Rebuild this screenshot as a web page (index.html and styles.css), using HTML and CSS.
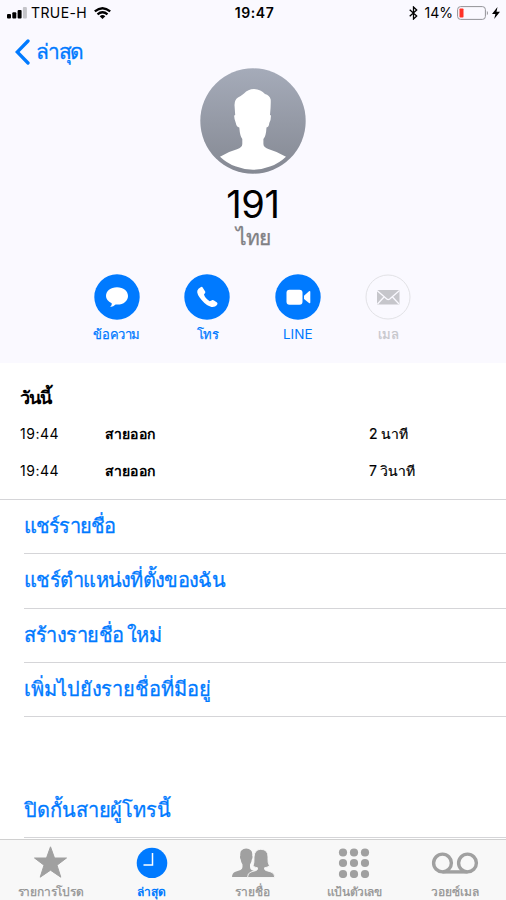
FILE: index.html
```html
<!DOCTYPE html>
<html lang="th">
<head>
<meta charset="utf-8">
<title>191</title>
<link rel="stylesheet" href="styles.css">
</head>
<body>
<div class="phone">
  <header class="top">
    <div class="status">
      <div class="carrier">
        <svg class="signal" width="20" height="12" viewBox="0 0 20 12"><rect x="0" y="7" width="4" height="4.5" rx="1"/><rect x="5.3" y="5.2" width="4" height="6.3" rx="1"/><rect x="10.6" y="3" width="4" height="8.5" rx="1"/><rect x="15.9" y="0" width="4" height="11.5" rx="1" fill="#c4c4c9"/></svg>
        <span class="carrier-name">TRUE-H</span>
        <svg class="wifi" width="17" height="12" viewBox="0 0 17 12"><g fill="none" stroke="#000" stroke-width="2.3"><path d="M.8 4.4Q8.5-2 16.200 4.400"/><path d="M3.500 7.300Q8.500 3.200 13.500 7.300"/></g><path d="M5.700 9.200Q8.500 7 11.300 9.200L8.500 12Z"/></svg>
      </div>
      <span class="clock">19:47</span>
      <div class="power">
        <svg class="bluetooth" width="9" height="14" viewBox="0 0 9 14" fill="none" stroke="#000" stroke-width="1.3"><path d="M.7 3.700L7.700 10 4.500 13V1L7.700 4 .7 10.300"/></svg>
        <span class="percent">14%</span>
        <svg width="33" height="14" viewBox="0 0 33 14"><rect x=".6" y=".6" width="27.800" height="12.800" rx="3" fill="none" stroke="#929297"/><rect x="2.500" y="2.500" width="4" height="9" rx=".8" fill="#ff3126"/><path d="M29.900 4.700Q32 7 29.900 9.300Z" fill="#929297"/></svg>
        <svg class="bolt" width="8" height="12" viewBox="0 0 8 12"><path d="M5.500 0L0 7H3.400L2.200 12 8 4.800H4.500Z"/></svg>
      </div>
    </div>
    <nav class="back">
      <svg width="15" height="26" viewBox="0 0 15 26" fill="none" stroke="#007aff" stroke-width="3.300" stroke-linecap="round"><path d="M13 2L2.200 13 13 24"/></svg>
      <span class="back-label">ล่าสุด</span>
    </nav>
    <svg class="avatar" width="106" height="106" viewBox="0 0 106 106">
      <defs><linearGradient id="shade" x2="0" y2="1"><stop stop-color="#a5abb9"/><stop offset="1" stop-color="#858993"/></linearGradient></defs>
      <circle cx="53" cy="53" r="52.700" fill="url(#shade)"/>
      <path fill="#fff" d="M20 88.700Q28 83.700 37 81.300Q42.300 79.500 42.300 76V71Q40 68.500 39.300 59.500Q36.500 59 35.800 55Q34 50.500 34.200 47.500L35.200 47L34.500 37Q34.500 31.500 38 29.500Q41 28 44 25.500Q48 21 54 21Q61 21.500 65 26Q69.500 27 70.700 31.500Q71 37 70 47L71 47.500Q71 52 69.300 55Q69 59 66.500 59.500Q66 68.500 63.400 71V76Q63.500 79.500 69 81.300Q78 84 86 88.700A48.300 48.300 0 0 1 20 88.700Z"/>
    </svg>
    <h1 class="number">191</h1>
    <p class="region">ไทย</p>
    <div class="actions">
      <div class="action">
        <svg width="46" height="46" viewBox="0 0 46 46"><circle cx="23" cy="23" r="22.700" fill="#007aff"/><path fill="#fff" d="M23 13.200C16.500 13.200 12 17 12 22Q12 26.500 17.700 29.200Q18.300 31.500 16.200 33.100Q19.500 32.700 21.600 30.500C29 31.300 34 27.200 34 22S29.500 13.200 23 13.200Z"/></svg>
        <span class="caption message">ข้อความ</span>
      </div>
      <div class="action">
        <svg width="46" height="46" viewBox="0 0 46 46"><circle cx="23" cy="23" r="22.700" fill="#007aff"/><path fill="#fff" d="M16.600 13.300Q18 12.200 18.800 13.700L21.300 17.800Q21.700 18.900 20 20.200Q20.500 23.500 25.700 27.300L28.500 26Q29.200 25.700 30 26.400L33 28.500Q34 29.200 33 31Q31 33.500 27.500 33Q22.500 31.800 17.600 26Q12.500 20 13.300 16.700Q14 14.500 16.600 13.300Z"/></svg>
        <span class="caption call">โทร</span>
      </div>
      <div class="action">
        <svg width="46" height="46" viewBox="0 0 46 46"><circle cx="23" cy="23" r="22.700" fill="#007aff"/><rect x="11.500" y="15.700" width="16" height="15" rx="3" fill="#fff"/><path d="M29 21.700L34 17.300Q35.300 16.500 35.300 18V28.300Q35.300 29.800 34 29L29 25Z" fill="#fff"/></svg>
        <span class="caption latin">LINE</span>
      </div>
      <div class="action">
        <svg width="46" height="46" viewBox="0 0 46 46"><circle cx="23" cy="23" r="22" fill="none" stroke="#e2e2e6"/><rect x="12" y="16" width="22.500" height="14.500" rx=".7" fill="#c6c6cb"/><path d="M12 16.500L21.800 25Q23.200 26.200 24.700 25L34.500 16.500M12.500 30L19 23M34 30L27.500 23" fill="none" stroke="#faf9ff" stroke-width="1.300"/></svg>
        <span class="caption mail">เมล</span>
      </div>
    </div>
  </header>
  <main>
    <section class="history">
      <h2 class="day">วันนี้</h2>
      <div class="entry"><span class="time">19:44</span><b class="kind">สายออก</b><span class="length">2 นาที</span></div>
      <div class="entry"><span class="time">19:44</span><b class="kind">สายออก</b><span class="length">7 วินาที</span></div>
    </section>
    <ul class="options">
      <li class="share">แชร์รายชื่อ</li>
      <li class="location">แชร์ตำแหน่งที่ตั้งของฉัน</li>
      <li class="create">สร้างรายชื่อ<span class="new">ใหม่</span></li>
      <li class="add">เพิ่มไปยังรายชื่อที่มีอยู่</li>
      <li class="block">ปิดกั้นสายผู้โทรนี้</li>
    </ul>
  </main>
  <footer class="tabs">
    <div class="tab favorites"><svg width="48" height="36" viewBox="0 0 48 36"><path fill="#a0a0a0" stroke="#a0a0a0" stroke-linejoin="round" d="M23.500 4.800L27.500 16H39.500L30 23.200L33.800 35.200L23.500 28.200L13.200 35.200L17 23.200L7.500 16H19.500Z"/></svg><span>รายการโปรด</span></div>
    <div class="tab active"><svg width="48" height="36" viewBox="0 0 48 36"><circle cx="24" cy="21" r="15.300" fill="#007aff"/><path d="M24.500 11V23H15.500" fill="none" stroke="#fff" stroke-width="1.500"/></svg><span>ล่าสุด</span></div>
    <div class="tab"><svg width="48" height="36" viewBox="0 0 48 36" fill="#a0a0a0"><path d="M3 35Q3 31 6.500 29.800L11.500 28Q13.500 27 13.500 25V22.500Q12 20.500 11.700 17.500Q10.500 15.500 11.300 13.500Q10.500 7 17.200 6.500Q24 7 23.200 13.500Q24 15.500 22.800 17.500Q22.500 20.500 21 22.500V25Q21 27 22.500 28L28 30V35Z"/><path stroke="#f8f8f8" stroke-width=".9" d="M18.500 35.500Q18.500 31 22 30L27 28.500Q29 28 28.500 25.800Q26 25.500 24 24Q25.300 21 25 15Q25.500 7.300 31.800 7.300Q39 7.300 39 15Q38.500 21 40.500 24Q38 25.500 35.500 25.800Q35.200 28 37 28.500L42 30Q45.800 31 45.800 35.500Z"/></svg><span>รายชื่อ</span></div>
    <div class="tab keypad"><svg width="48" height="36" viewBox="0 0 48 36" fill="#a0a0a0"><circle cx="13" cy="10.500" r="4.100"/><circle cx="24" cy="10.500" r="4.100"/><circle cx="35" cy="10.500" r="4.100"/><circle cx="13" cy="21" r="4.100"/><circle cx="24" cy="21" r="4.100"/><circle cx="35" cy="21" r="4.100"/><circle cx="13" cy="32" r="4.100"/><circle cx="24" cy="32" r="4.100"/><circle cx="35" cy="32" r="4.100"/></svg><span>แป้นตัวเลข</span></div>
    <div class="tab"><svg width="48" height="36" viewBox="0 0 48 36" fill="none" stroke="#a0a0a0" stroke-width="3.400"><circle cx="11.500" cy="21" r="8.900"/><circle cx="36.500" cy="21" r="8.900"/><path d="M11.500 29.900H36.500"/></svg><span>วอยซ์เมล</span></div>
  </footer>
</div>
</body>
</html>
```
FILE: styles.css
```css
* { box-sizing: border-box; }
body { margin: 0; background: #fff; color: #000; font-family: Inter, "Noto Sans", sans-serif; }
h1, h2, p, ul { margin: 0; padding: 0; font-weight: 400; }
svg { display: block; flex: none; }
span, b, li { white-space: nowrap; }
.phone { width: 506px; height: 900px; display: flex; flex-direction: column; overflow: hidden; }
.top { height: 363px; background: #faf9ff; display: flex; flex-direction: column; flex: none; }
.status { height: 26px; display: grid; grid-template-columns: 1fr auto 1fr; align-items: center; padding: 0 6px 0 7px; font-size: 14px; line-height: 26px; }
.carrier, .power { display: flex; align-items: center; }
.carrier-name { margin: 0 7px 0 4px; letter-spacing: .4px; }
.clock { font-weight: 600; letter-spacing: .6px; padding-left: 2px; }
.power { justify-content: flex-end; }
.percent { margin: 0 4px 0 7px; }
.bolt { margin-left: 2px; }
.back { height: 43px; padding: 8px 0 0 15px; display: flex; align-items: center; gap: 6px; color: #007aff; }
.back-label { font-size: 21px; line-height: 30px; letter-spacing: -1.200px; -webkit-text-stroke: .3px; }
.avatar { align-self: center; margin-top: -1px; }
.number { height: 46px; margin-top: 7px; text-align: center; font-size: 38px; line-height: 46px; letter-spacing: -.3px; }
.region { height: 24px; margin-top: -1px; text-align: center; color: #808084; font-size: 21px; line-height: 24px; letter-spacing: -.7px; -webkit-text-stroke: .3px; }
.actions { display: grid; grid-template-columns: repeat(4, 90.500px); justify-content: center; margin: 24px 1px 0 0; }
.action { display: flex; flex-direction: column; align-items: center; color: #007aff; }
.caption { font-size: 13px; line-height: 20px; margin-top: 4px; -webkit-text-stroke: .25px; }
.caption.message { letter-spacing: -.4px; }
.caption.call { letter-spacing: -.5px; }
.caption.latin { font-size: 13.500px; -webkit-text-stroke: 0; }
.caption.mail { color: #c6c6cb; }
.history { height: 137px; padding: 21px 20px 0; border-bottom: 1px solid #d5d5d8; }
.day { font-size: 18px; font-weight: 600; line-height: 28px; height: 31px; letter-spacing: -1.200px; }
.entry { display: grid; grid-template-columns: 85px 264px 1fr; height: 36.500px; line-height: 37px; font-size: 14px; }
.time { letter-spacing: .5px; }
.kind { font-weight: 600; letter-spacing: .15px; }
.length { letter-spacing: -.2px; -webkit-text-stroke: .2px; }
.options { list-style: none; color: #007aff; font-size: 20px; -webkit-text-stroke: .3px; }
.options li { height: 54.300px; margin-left: 24px; border-bottom: 1px solid #d5d5d8; line-height: 53px; }
.options .share { letter-spacing: -.850px; }
.options .location { letter-spacing: -.700px; }
.options .create { letter-spacing: -.500px; }
.new { margin-left: 3px; }
.options .add, .options .block { letter-spacing: -.080px; }
.options .block { height: 121px; padding-top: 67px; }
.tabs { height: 61px; flex: none; margin-top: auto; background: #f8f8f8; border-top: 1px solid #d0d0d0; display: grid; grid-template-columns: repeat(5, 1fr); color: #929292; z-index: 1; }
main { height: 476px; flex: none; }
.tab { display: flex; flex-direction: column; align-items: center; font-size: 12px; line-height: 18px; padding-top: 2px; -webkit-text-stroke: .25px; }
.tab span { margin-top: 5px; }
.favorites { letter-spacing: -.2px; }
.keypad { letter-spacing: -.4px; }
.active { color: #007aff; font-weight: 600; -webkit-text-stroke: 0; }
```
